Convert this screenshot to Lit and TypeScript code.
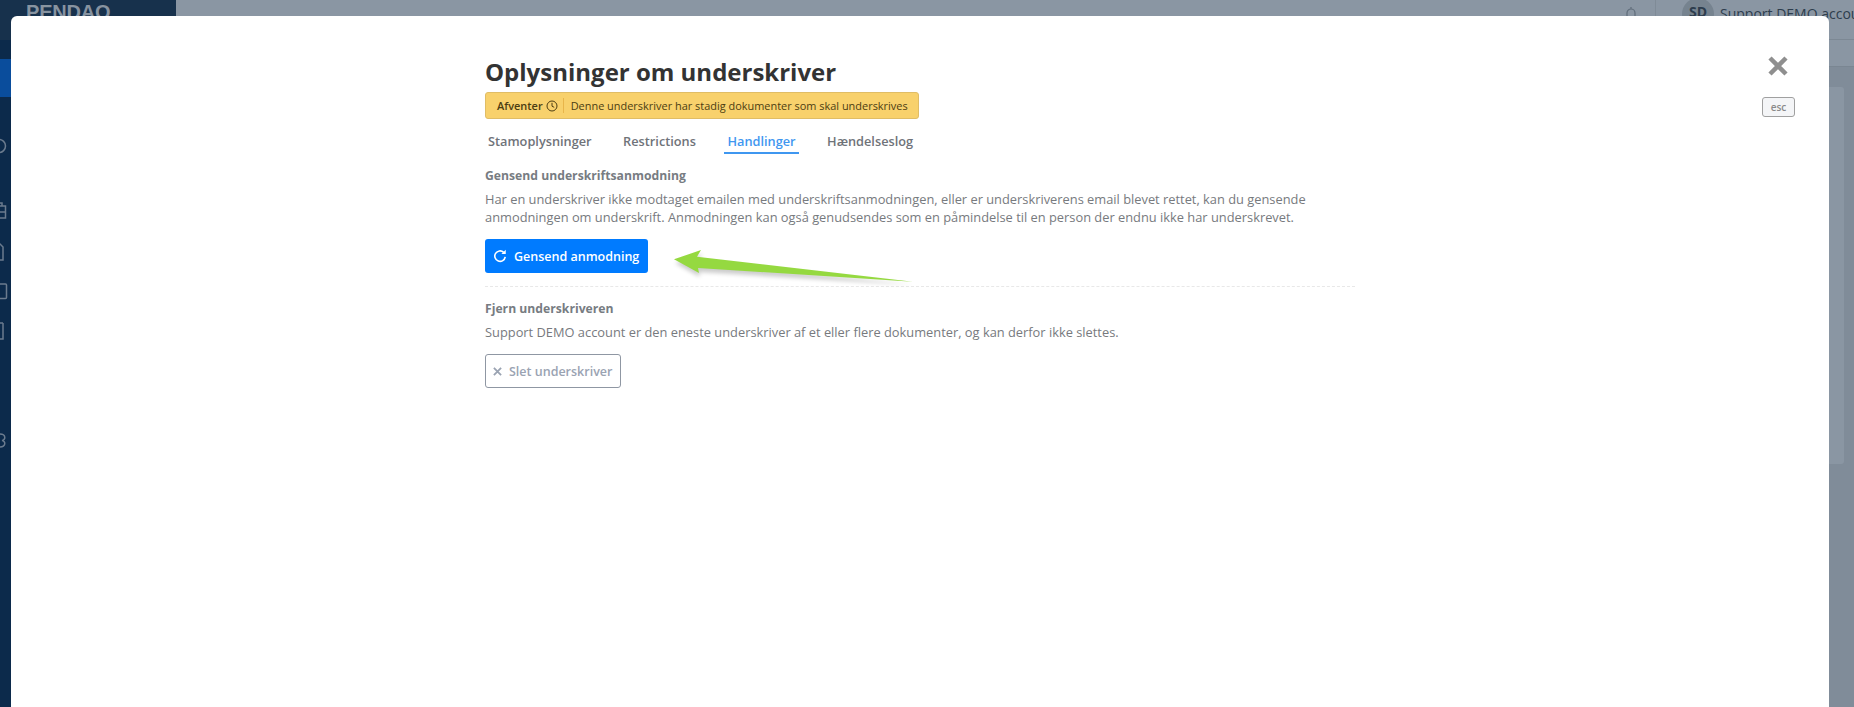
import {LitElement, html, css} from 'lit';
import {customElement} from 'lit/decorators.js';

const refreshIcon = html`<svg class="btn-icon" viewBox="0 0 16 16" fill="none" stroke="currentColor" stroke-width="1.8">
    <path d="M14 9a6 6 0 1 1-1.8-5.2"/>
    <path d="M14.6 0.8v5h-5z" fill="currentColor" stroke="none"/>
</svg>`;

const clockIcon = html`<svg class="clock" viewBox="0 0 12 12" fill="none" stroke="currentColor" stroke-width="1">
    <circle cx="6" cy="6" r="5"/>
    <path d="M6 2.8v3.4l2.2 1.1"/>
</svg>`;

const tabs = ['Stamoplysninger', 'Restrictions', 'Handlinger', 'Hændelseslog'];

@customElement('app-root')
export class AppRoot extends LitElement {

    static override styles = css`
        :host {
            display: block;
            position: relative;
            width: 1854px;
            height: 707px;
            overflow: hidden;
            font-family: "Open Sans", sans-serif;
            background: #808c99;
        }

        /* app behind the dimmed overlay */
        .backdrop {
            display: flex;
            height: 707px;
        }

        .sidebar {
            width: 176px;
            flex: none;
            background: #0c2a4b;
        }

        .brand {
            height: 40px;
            padding-left: 26px;
            background: #17314c;
            color: #8793a0;
            font-family: "Liberation Sans", sans-serif;
            font-size: 20px;
            font-weight: 700;
            line-height: 24px;
            letter-spacing: -0.2px;
            overflow: hidden;
        }

        .active-item {
            height: 38px;
            margin-top: 19px;
            background: #0a4d9c;
        }

        .main {
            flex: 1;
            display: flex;
            flex-direction: column;
        }

        .topbar {
            height: 39px;
            flex: none;
            display: flex;
            justify-content: flex-end;
            background: #8a96a3;
            border-bottom: 1px solid #7c8894;
        }

        .bell {
            width: 12px;
            height: 14px;
            margin: 7px 18px 0 0;
            flex: none;
        }

        .user {
            display: flex;
            gap: 6px;
            width: 172px;
            height: 28px;
            padding-left: 26px;
            border-left: 1px solid #7f8b97;
            flex: none;
            font-size: 14px;
            line-height: 28px;
            color: #2d3d4d;
            white-space: nowrap;
            overflow: hidden;
        }

        .avatar {
            width: 32px;
            height: 32px;
            flex: none;
            border-radius: 50%;
            background: #76838f;
            font-weight: 700;
            text-align: center;
            line-height: 28px;
            margin-top: -2px;
        }

        .subbar {
            height: 26px;
            background: #8a96a3;
            border-bottom: 1px solid #7a8692;
        }

        .content {
            flex: 1;
            padding: 20px 10px 0 0;
            display: flex;
            justify-content: flex-end;
            align-items: flex-start;
        }

        .panel {
            width: 300px;
            height: 377px;
            background: #8a96a3;
            border-radius: 3px;
        }

        .rail-icons {
            position: absolute;
            left: 0;
            top: 0;
        }

        /* modal */
        .modal {
            position: absolute;
            left: 11px;
            top: 16px;
            width: 1818px;
            height: 691px;
            background: #fff;
            border-radius: 6px 6px 0 0;
            box-sizing: border-box;
            padding: 38px 0 0 474px;
        }

        .body {
            width: 870px;
        }

        h1 {
            margin: 0;
            font-size: 24px;
            line-height: 36px;
            font-weight: 700;
            color: #333;
        }

        .status {
            display: inline-flex;
            align-items: center;
            vertical-align: top;
            height: 27px;
            box-sizing: border-box;
            margin-top: 2px;
            padding: 0 10px 0 11px;
            background: #f8d16c;
            border: 1px solid #e0bd66;
            border-radius: 3px;
            font-size: 10.95px;
            color: #4c3d12;
        }

        .status b {
            font-weight: 600;
        }

        .clock {
            width: 12px;
            height: 12px;
            margin-left: 3px;
        }

        .status .sep {
            width: 1px;
            height: 15px;
            margin: 0 7px 0 5px;
            background: #e8b54a;
        }

        .tabs {
            display: flex;
            gap: 25.5px;
            margin-top: 12px;
        }

        .tab {
            padding: 0 3px 1px;
            font-size: 12.75px;
            font-weight: 600;
            line-height: 20px;
            color: #6f7379;
            border-bottom: 2px solid transparent;
        }

        .tab.active {
            color: #3f97f0;
            border-bottom-color: #3f97f0;
        }

        h2 {
            margin: 0;
            font-size: 12.2px;
            line-height: 16px;
            font-weight: 700;
            color: #777c82;
        }

        p {
            margin: 6px 0 0;
            font-size: 12.85px;
            line-height: 18px;
            color: #777a7e;
        }

        .section-first {
            margin-top: 14px;
        }

        .section-second {
            margin-top: 14px;
        }

        .btn {
            display: flex;
            align-items: center;
            box-sizing: border-box;
            margin-top: 13px;
            height: 34px;
            border-radius: 3px;
            font-size: 12.5px;
            font-weight: 600;
            font-family: inherit;
            white-space: nowrap;
        }

        .btn-primary {
            gap: 7px;
            width: 163px;
            padding: 0 0 0 8px;
            background: #007bff;
            color: #fff;
            border: 0;
        }

        .btn-icon {
            width: 14px;
            height: 14px;
        }

        .divider {
            margin-top: 13px;
            border-top: 1px dashed #e8e8e8;
        }

        .btn-outline {
            gap: 7px;
            width: 136px;
            padding: 0 0 0 7px;
            background: #fff;
            color: #9aa3b2;
            border: 1px solid #8f97a3;
        }

        .x-small {
            width: 9px;
            height: 9px;
        }

        .close {
            position: absolute;
            top: 40px;
            right: 41px;
            width: 20px;
            height: 20px;
        }

        .esc {
            position: absolute;
            top: 81px;
            right: 34px;
            width: 33px;
            height: 20px;
            box-sizing: border-box;
            border: 1px solid #a0a0a0;
            border-radius: 3px;
            background: #f4f5f7;
            font-size: 10px;
            font-weight: 600;
            line-height: 18px;
            text-align: center;
            color: #8a8a8a;
        }

        .arrow {
            position: absolute;
            left: 660px;
            top: 240px;
            width: 270px;
            height: 60px;
            overflow: visible;
        }
    `;

    override render() {
        return html`
        <div class="backdrop">
            <div class="sidebar">
                <div class="brand">PENDAO</div>
                <div class="active-item"></div>
            </div>
            <div class="main">
                <div class="topbar">
                    <svg class="bell" viewBox="0 0 12 14" fill="none" stroke="#5f6c7a" stroke-width="1.2"><path d="M2 11V6a4 4 0 0 1 8 0v5zM6 0v2"/></svg>
                    <div class="user"><div class="avatar">SD</div>Support DEMO account</div>
                </div>
                <div class="subbar"></div>
                <div class="content"><div class="panel"></div></div>
            </div>
        </div>

        <svg class="rail-icons" width="11" height="460" fill="none" stroke="#6b7b8e" stroke-width="1.5">
            <circle cx="-1" cy="146" r="6.5"/>
            <path d="M-6 206h11.5v12H-6zM-6 212h11.5M-2 206v-3h4v3"/>
            <path d="M-8 244h8l3 3v13H-8z"/>
            <rect x="-6" y="284" width="12.5" height="14.5" rx="1"/>
            <path d="M-6 323h9M-4 323v16h7v-16"/>
            <path d="M0 434c6 0 6 6 2 6.5c4 .5 4 6.5-2 6.5"/>
        </svg>

        <div class="modal">
            <div class="body">
                <h1>Oplysninger om underskriver</h1>
                <div class="status">
                    <b>Afventer</b>${clockIcon}<span class="sep"></span>
                    <span>Denne underskriver har stadig dokumenter som skal underskrives</span>
                </div>
                <div class="tabs">
                    ${tabs.map((t) => html`<div class="tab ${t === 'Handlinger' ? 'active' : ''}">${t}</div>`)}
                </div>

                <div class="section-first">
                    <h2>Gensend underskriftsanmodning</h2>
                    <p>Har en underskriver ikke modtaget emailen med underskriftsanmodningen, eller er underskriverens email blevet rettet, kan du gensende<br>anmodningen om underskrift. Anmodningen kan også genudsendes som en påmindelse til en person der endnu ikke har underskrevet.</p>
                    <button class="btn btn-primary">${refreshIcon}<span>Gensend anmodning</span></button>
                </div>

                <div class="divider"></div>

                <div class="section-second">
                    <h2>Fjern underskriveren</h2>
                    <p>Support DEMO account er den eneste underskriver af et eller flere dokumenter, og kan derfor ikke slettes.</p>
                    <button class="btn btn-outline">
                        <svg class="x-small" viewBox="0 0 10 10" stroke="currentColor" stroke-width="2"><path d="M1 1l8 8M9 1l-8 8"/></svg>
                        <span>Slet underskriver</span>
                    </button>
                </div>
            </div>

            <svg class="close" viewBox="0 0 20 20" stroke="#8f8f8f" stroke-width="4.5"><path d="M2 2l16 16M18 2L2 18"/></svg>
            <div class="esc">esc</div>
        </div>

        <!-- annotation drawn on top of the screenshot -->
        <svg class="arrow" viewBox="0 0 270 60">
            <defs>
                <filter id="soft" x="-10%" y="-50%" width="120%" height="200%"><feGaussianBlur stdDeviation="2"/></filter>
            </defs>
            <polygon points="14,21 41,12 37,19 253,43 38,30 39,35" fill="#000" opacity=".2" filter="url(#soft)" transform="translate(1 2)"/>
            <polygon points="14,19.3 41,10 37,16.7 253,41.7 38,28 39,33" fill="#95d940"/>
        </svg>
        `;
    }
}
